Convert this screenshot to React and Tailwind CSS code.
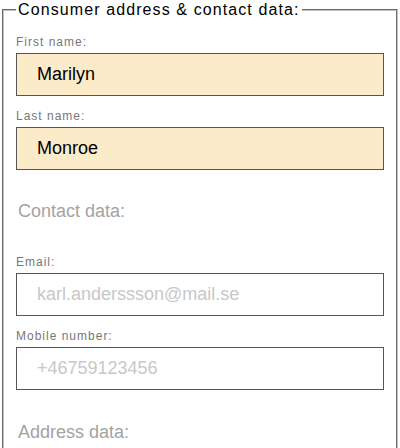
import React, { useState } from "react";

const font = { fontFamily: '"Liberation Sans", Arial, sans-serif' };

function Field({ label, value, placeholder, filled, className = "" }) {
  const [val, setVal] = useState(value || "");
  return (
    <div className={className}>
      <label className="block text-[12px] leading-[14px] tracking-[1px] text-[#777] mb-[4px]">
        {label}
      </label>
      <input
        type="text"
        value={val}
        placeholder={placeholder}
        onChange={(e) => setVal(e.target.value)}
        className={
          "block w-full h-[43px] border border-[#555] pl-[20px] pr-2 text-[18px] text-black placeholder-[#c8c8c8] outline-none " +
          (filled ? "bg-[#fcebc8]" : "bg-white")
        }
      />
    </div>
  );
}

export default function App() {
  return (
    <div className="w-[400px] h-[448px] overflow-hidden bg-white" style={font}>
      <fieldset className="mx-[2px] border-2 [border-style:groove] border-[#c0c0c0] px-3 pt-[15px] pb-4">
        <legend className="px-[2px] text-[16px] leading-[20px] tracking-[1.1px] text-black">
          Consumer address &amp; contact data:
        </legend>

        <Field label="First name:" value="Marilyn" filled />
        <Field label="Last name:" value="Monroe" filled className="mt-[13px]" />

        <h3 className="mt-[31px] pl-[2px] text-[18px] leading-[20px] text-[#a3a3a3]">
          Contact data:
        </h3>

        <Field label="Email:" placeholder="karl.anderssson@mail.se" className="mt-[34px]" />
        <Field label="Mobile number:" placeholder="+46759123456" className="mt-[13px]" />

        <h3 className="mt-[32px] pl-[2px] text-[18px] leading-[20px] text-[#a3a3a3]">
          Address data:
        </h3>
      </fieldset>
    </div>
  );
}
